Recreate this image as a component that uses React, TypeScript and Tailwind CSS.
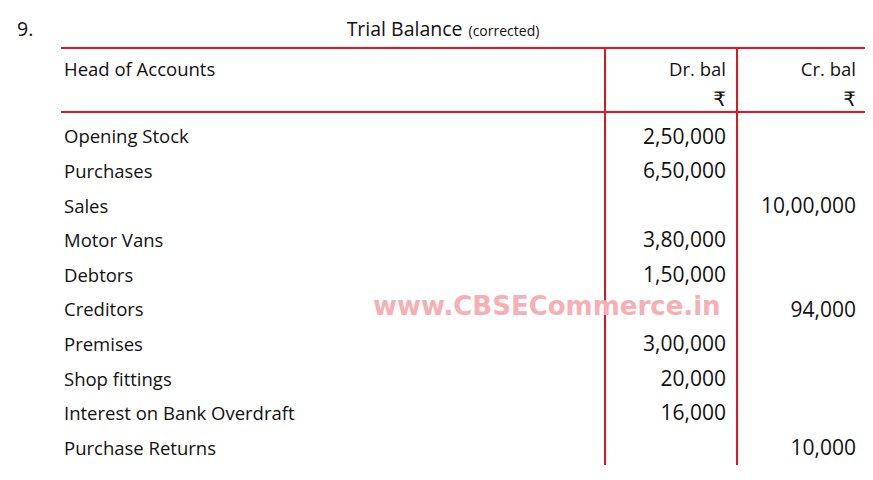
const rows: [string, string, string][] = [
  ["Opening Stock", "2,50,000", ""],
  ["Purchases", "6,50,000", ""],
  ["Sales", "", "10,00,000"],
  ["Motor Vans", "3,80,000", ""],
  ["Debtors", "1,50,000", ""],
  ["Creditors", "", "94,000"],
  ["Premises", "3,00,000", ""],
  ["Shop fittings", "20,000", ""],
  ["Interest on Bank Overdraft", "16,000", ""],
  ["Purchase Returns", "", "10,000"],
];

const comic = "font-['Open_Sans',sans-serif]";
const num = "font-['Open_Sans',sans-serif]";

export default function App() {
  return (
    <div className={`relative h-[480px] w-[873px] bg-white text-[#111] ${comic}`}>
      {/* title */}
      <div className="flex h-[47px] items-center pt-[10px]">
        <span className="w-[61px] pl-[17px] text-[19.5px]">9.</span>
        <div className="flex flex-1 items-baseline justify-center gap-[6px] pr-[48px]">
          <span className="text-[19.5px]">Trial Balance</span>
          <span className="text-[14px]">(corrected)</span>
        </div>
      </div>

      {/* table */}
      <div className="ml-[61px] w-[804px] border-t-2 border-[#e8141c]">
        <div className="grid h-[64px] grid-cols-[543px_132px_129px] border-b-2 border-[#e8141c]">
          <div className="pl-[3px] pt-[6px] text-[18.5px]">Head of Accounts</div>
          <div className="flex flex-col items-end border-l-2 border-[#e8141c] pr-[10px] pt-[6px] text-[18.5px]">
            <span>Dr. bal</span>
            <span className="mt-[6px] text-[20px] leading-none font-['DejaVu_Sans',sans-serif]">₹</span>
          </div>
          <div className="flex flex-col items-end border-l-2 border-[#e8141c] pr-[9px] pt-[6px] text-[18.5px]">
            <span>Cr. bal</span>
            <span className="mt-[6px] text-[20px] leading-none font-['DejaVu_Sans',sans-serif]">₹</span>
          </div>
        </div>
        <div className="grid grid-cols-[543px_132px_129px]">
          <div className="pt-[6px]">
            {rows.map(([head]) => (
              <div key={head} className="flex h-[34.6px] items-center pl-[3px] text-[18.5px]">
                {head}
              </div>
            ))}
          </div>
          <div className="border-l-2 border-[#e8141c] pt-[6px]">
            {rows.map(([head, dr]) => (
              <div key={head} className={`flex h-[34.6px] items-center justify-end pr-[10px] text-[21px] ${num}`}>
                {dr}
              </div>
            ))}
          </div>
          <div className="border-l-2 border-[#e8141c] pt-[6px]">
            {rows.map(([head, , cr]) => (
              <div key={head} className={`flex h-[34.6px] items-center justify-end pr-[9px] text-[21px] ${num}`}>
                {cr}
              </div>
            ))}
          </div>
        </div>
      </div>

      {/* watermark */}
      <div className="pointer-events-none absolute left-[373px] top-[287px] text-[26px] font-bold text-[#f6b0b4] font-['DejaVu_Sans',sans-serif]">
        www.CBSECommerce.in
      </div>
    </div>
  );
}
